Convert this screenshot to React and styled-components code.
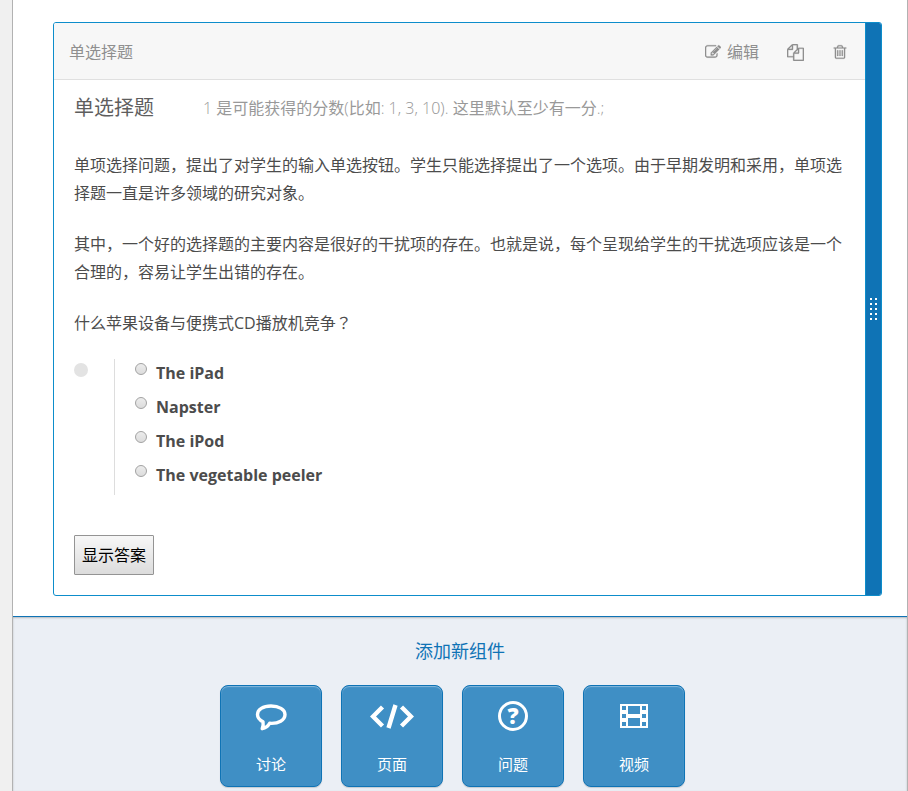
import React from "react";
import styled, { createGlobalStyle } from "styled-components";

const GlobalStyle = createGlobalStyle`
  * { box-sizing: border-box; }
  body {
    margin: 0;
    background: #f0f0f0;
    color: #4c4c4c;
    font-family: "Open Sans", "Noto Sans CJK SC", sans-serif;
    font-size: 16px;
    line-height: 28px;
  }
  button, input { font: inherit; }
`;

const Page = styled.main`
  display: flex;
  flex-direction: column;
  min-height: 100vh;
  margin-left: 12px;
  background: #fff;
  border: solid #b2b2b2;
  border-width: 0 1px;
`;

const Card = styled.article`
  display: flex;
  margin: 22px 25px 20px 40px;
  border: 1px solid #0d8dcb;
  border-radius: 3px;
  overflow: hidden;
`;

const CardMain = styled.div`
  flex: 1;
  min-width: 0;
`;

const DragHandle = styled.button`
  display: grid;
  place-items: center;
  width: 16px;
  padding: 0;
  border: 0;
  border-left: 1px solid #0d8dcb;
  background: #0f73b5;
  cursor: move;
`;

const CardHeader = styled.header`
  display: flex;
  align-items: center;
  justify-content: space-between;
  height: 57px;
  padding: 2px 17px 0 15px;
  border-bottom: 1px solid #e0e0e0;
  background: #f7f7f7;
  color: #8f8f8f;
`;

const Actions = styled.div`
  display: flex;
  align-items: center;
  gap: 28px;
`;

const ActionButton = styled.button`
  display: flex;
  align-items: center;
  gap: 6px;
  padding: 0;
  border: 0;
  background: none;
  color: #8f8f8f;
  cursor: pointer;
`;

const CardBody = styled.section`
  padding: 14px 20px 20px;
`;

const ProblemHead = styled.div`
  display: flex;
  align-items: center;
  gap: 49px;
  margin-bottom: 29px;
`;

const ProblemTitle = styled.h2`
  margin: 0;
  font-size: 20px;
  font-weight: 400;
  line-height: 28px;
  color: #5e5e5e;
`;

const Score = styled.p`
  margin: 0;
  font-family: "Open Sans Light", "Noto Sans CJK SC", sans-serif;
  color: #999;
`;

const Paragraph = styled.p`
  margin: 0 0 23px;
`;

const Question = styled.p`
  margin: 0 0 22px;
  font-family: "Open Sans", "Noto Sans CJK TC", sans-serif;
`;

const Answer = styled.div`
  display: flex;
  gap: 26px;
  margin-bottom: 40px;
`;

const StatusDot = styled.span`
  width: 14px;
  height: 14px;
  margin-top: 4px;
  border-radius: 50%;
  background: #e3e3e3;
`;

const Choices = styled.fieldset`
  flex: 1;
  min-width: 0;
  margin: 0;
  padding: 0 0 0 20px;
  border: 0;
  border-left: 1px solid #ddd;
`;

const Choice = styled.label`
  display: flex;
  align-items: flex-start;
  gap: 9px;
  height: 34px;
  font-weight: 700;
  cursor: pointer;
`;

const Radio = styled.input`
  appearance: none;
  width: 12px;
  height: 12px;
  margin: 4px 0 0;
  border: 1px solid #a2a2a2;
  border-radius: 50%;
  background: linear-gradient(#ececec, #dcdcdc);

  &:checked {
    background: radial-gradient(#4c4c4c 35%, #dedede 40%);
  }
`;

const ShowAnswer = styled.button`
  height: 40px;
  padding: 0 7px;
  border: 1px solid #949494;
  border-radius: 1px;
  background: linear-gradient(#f7f7f7, #dcdcdc);
  color: #000;
  cursor: pointer;
`;

const AddPanel = styled.section`
  flex: 1;
  padding: 20px 0 4px;
  border-top: 1px solid #0f73b5;
  background: #ebeff5;
  box-shadow: inset 0 1px 2px #b5b9be;
`;

const AddTitle = styled.h2`
  margin: 0 0 20px;
  font-size: 18px;
  font-weight: 400;
  line-height: 28px;
  text-align: center;
  color: #0f73b5;
`;

const Tiles = styled.div`
  display: flex;
  flex-wrap: wrap;
  justify-content: center;
  gap: 19px;
  padding-right: 15px;
`;

const Tile = styled.button`
  display: flex;
  flex-direction: column;
  align-items: center;
  gap: 17px;
  width: 102px;
  height: 102px;
  padding: 13px 0 0;
  border: 1px solid #0f73b5;
  border-radius: 8px;
  background: #3f8fc5;
  box-shadow: inset 0 1px 1px #86b8dc, 0 1px 1px #c4cbd2;
  color: #fff;
  font-size: 15px;
  cursor: pointer;
`;

const Svg = styled.svg`
  display: block;
  fill: currentColor;
`;

const EDIT =
  "M888 1184l116-116-152-152-116 116v56h96v96h56zm440-720q-16-16-33 1l-350 350q-17 17-1 33t33-1l350-350q17-17 1-33zm80 594v190q0 119-84.5 203.5t-203.5 84.5h-832q-119 0-203.5-84.5t-84.5-203.5v-832q0-119 84.5-203.5t203.5-84.5h832q63 0 117 25 15 7 18 23 3 17-9 29l-49 49q-14 14-32 8-23-6-45-6h-832q-66 0-113 47t-47 113v832q0 66 47 113t113 47h832q66 0 113-47t47-113v-126q0-13 9-22l64-64q15-15 35-7t20 29zm-96-738l288 288-672 672h-288v-288zm444 132l-92 92-288-288 92-92q28-28 68-28t68 28l152 152q28 28 28 68t-28 68z";
const COPY =
  "M1696 384q40 0 68 28t28 68v1216q0 40-28 68t-68 28h-960q-40 0-68-28t-28-68v-288h-544q-40 0-68-28t-28-68v-672q0-40 20-88t48-76l408-408q28-28 76-48t88-20h416q40 0 68 28t28 68v328q68-40 128-40h416zm-544 213l-299 299h299v-299zm-640-384l-299 299h299v-299zm196 647l316-316v-416h-384v416q0 40-28 68t-68 28h-416v640h512v-256q0-40 20-88t48-76zm956 804v-1152h-384v416q0 40-28 68t-68 28h-416v640h896z";
const TRASH =
  "M704 736v576q0 14-9 23t-23 9h-64q-14 0-23-9t-9-23v-576q0-14 9-23t23-9h64q14 0 23 9t9 23zm256 0v576q0 14-9 23t-23 9h-64q-14 0-23-9t-9-23v-576q0-14 9-23t23-9h64q14 0 23 9t9 23zm256 0v576q0 14-9 23t-23 9h-64q-14 0-23-9t-9-23v-576q0-14 9-23t23-9h64q14 0 23 9t9 23zm128 724v-948h-896v948q0 22 7 40.5t14.5 27 10.5 8.5h832q3 0 10.5-8.5t14.5-27 7-40.5zm-672-1076h448l-48-117q-7-9-17-11h-317q-10 2-17 11zm928 32v64q0 14-9 23t-23 9h-96v948q0 83-47 143.5t-113 60.5h-832q-66 0-113-58.5t-47-141.5v-952h-96q-14 0-23-9t-9-23v-64q0-14 9-23t23-9h309l70-167q15-37 54-63t79-26h320q40 0 79 26t54 63l70 167h309q14 0 23 9t9 23z";

const ActionIcon = ({ d, size }) => (
  <Svg width={size} height={size} viewBox="0 0 1792 1792" aria-hidden="true">
    <path d={d} stroke="currentColor" strokeWidth="24" />
  </Svg>
);

const Grip = () => (
  <Svg width="7" height="22" viewBox="0 0 7 22" color="#fff" aria-hidden="true">
    {[0, 5, 10, 15, 20].map((y) => (
      <path key={y} d={`M0 ${y}h2v2h-2zM5 ${y}h2v2h-2z`} />
    ))}
  </Svg>
);

const TileIcon = ({ children }) => (
  <Svg width="44" height="34" viewBox="0 0 44 34" aria-hidden="true">
    {children}
  </Svg>
);

const tiles = [
  {
    label: "讨论",
    icon: (
      <path
        d="M22 7C14 7 8.500 10.500 8.500 15.500C8.500 18.500 10.500 21 14 22.700C14.500 25.500 14.200 27.500 13.200 29.700C16.500 29 19 27 20.600 24.300C29.500 25 36 21 36 15.500C36 10.500 30 7 22 7Z"
        fill="none"
        stroke="currentColor"
        strokeWidth="3.400"
        strokeLinejoin="round"
      />
    ),
  },
  {
    label: "页面",
    icon: (
      <path
        d="M12.500 8L3 17.500l9.500 9.500M31.500 8L41 17.500l-9.500 9.500M25.500 6L18.500 29"
        fill="none"
        stroke="currentColor"
        strokeWidth="4.400"
      />
    ),
  },
  {
    label: "问题",
    icon: (
      <>
        <circle cx="22" cy="17" r="13.500" fill="none" stroke="currentColor" strokeWidth="3" />
        <text x="22" y="25" textAnchor="middle" fontSize="22" fontWeight="800">?</text>
      </>
    ),
  },
  {
    label: "视频",
    icon: (
      <path
        fillRule="evenodd"
        d="M8 5h28v24H8zM10 7v4h4v-4zM10 15v4h4v-4zM10 23v4h4v-4zM30 7v4h4v-4zM30 15v4h4v-4zM30 23v4h4v-4zM16 7v8h12v-8zM16 19v8h12v-8z"
      />
    ),
  },
];

const choices = ["The iPad", "Napster", "The iPod", "The vegetable peeler"];

export default function App() {
  return (
    <>
      <GlobalStyle />
      <Page>
        <Card>
          <CardMain>
            <CardHeader>
              <span>单选择题</span>
              <Actions>
                <ActionButton>
                  <ActionIcon d={EDIT} size={16} />
                  编辑
                </ActionButton>
                <ActionButton aria-label="复制">
                  <ActionIcon d={COPY} size={17} />
                </ActionButton>
                <ActionButton aria-label="删除">
                  <ActionIcon d={TRASH} size={16} />
                </ActionButton>
              </Actions>
            </CardHeader>
            <CardBody>
              <ProblemHead>
                <ProblemTitle>单选择题</ProblemTitle>
                <Score>1 是可能获得的分数(比如: 1, 3, 10). 这里默认至少有一分.;</Score>
              </ProblemHead>
              <Paragraph>
                单项选择问题，提出了对学生的输入单选按钮。学生只能选择提出了一个选项。由于早期发明和采用，单项选择题一直是许多领域的研究对象。
              </Paragraph>
              <Paragraph>
                其中，一个好的选择题的主要内容是很好的干扰项的存在。也就是说，每个呈现给学生的干扰选项应该是一个合理的，容易让学生出错的存在。
              </Paragraph>
              <Question id="question">什么苹果设备与便携式CD播放机竞争？</Question>
              <Answer>
                <StatusDot />
                <Choices aria-labelledby="question">
                  {choices.map((text) => (
                    <Choice key={text}>
                      <Radio type="radio" name="device" value={text} />
                      {text}
                    </Choice>
                  ))}
                </Choices>
              </Answer>
              <ShowAnswer>显示答案</ShowAnswer>
            </CardBody>
          </CardMain>
          <DragHandle aria-label="拖动">
            <Grip />
          </DragHandle>
        </Card>
        <AddPanel>
          <AddTitle>添加新组件</AddTitle>
          <Tiles>
            {tiles.map(({ label, icon }) => (
              <Tile key={label}>
                <TileIcon>{icon}</TileIcon>
                {label}
              </Tile>
            ))}
          </Tiles>
        </AddPanel>
      </Page>
    </>
  );
}
